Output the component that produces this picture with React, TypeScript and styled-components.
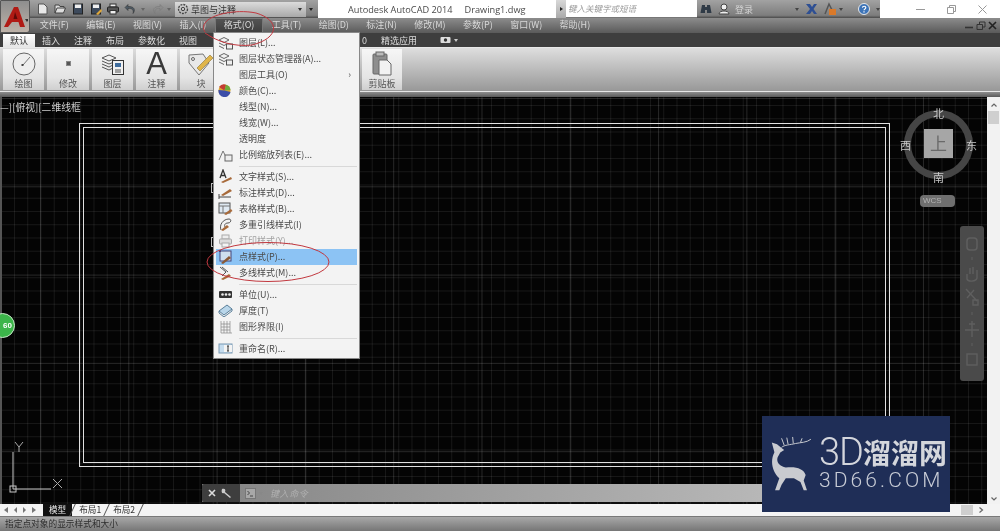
import React from "react";
import styled, { createGlobalStyle } from "styled-components";

const CJK = `"Noto Sans CJK SC", "Liberation Sans", sans-serif`;

const Global = createGlobalStyle`
  html, body { margin: 0; padding: 0; background: #000; overflow: hidden; }
  * { box-sizing: border-box; }
`;

const Page = styled.div`
  position: relative;
  width: 1000px;
  height: 531px;
  display: flex;
  flex-direction: column;
  overflow: hidden;
  font-family: ${CJK};
  font-size: 9px;
  background: #fff;
  filter: blur(0.4px);
`;

/* ---- top bars ---- */
const TitleBar = styled.div`
  height: 18px;
  display: flex;
  background: #fff;
  padding-left: 30px;
  flex: none;
`;
const GreyStrip = styled.div<{ $w: number }>`
  width: ${(p) => p.$w}px;
  height: 18px;
  flex: none;
  display: flex;
  align-items: center;
  background: linear-gradient(#a2a2a2, #7d7d7d 85%, #4a4a4a);
`;
const QatIcon = styled.span<{ $ml?: number }>`
  display: inline-flex;
  margin-left: ${(p) => p.$ml ?? 5}px;
`;
const Caret = styled.span<{ $ml?: number; $c?: string }>`
  display: inline-block;
  margin-left: ${(p) => p.$ml ?? 3}px;
  width: 0;
  height: 0;
  border: 2px solid transparent;
  border-top: 3px solid ${(p) => p.$c ?? "#444"};
  border-bottom: 0;
`;
const Combo = styled.div`
  width: 131px;
  height: 15px;
  margin-left: 4px;
  display: flex;
  align-items: center;
  padding: 0 4px 0 2px;
  background: linear-gradient(#dcdcdc, #a8a8a8);
  color: #333;
  font-size: 9px;
  gap: 2px;
`;
const ComboLabel = styled.span`
  flex: 1;
`;
const TitleText = styled.div`
  width: 238px;
  flex: none;
  display: flex;
  padding-left: 30px;
  gap: 12px;
  align-items: center;
  font-family: "Open Sans", "Liberation Sans", sans-serif;
  font-size: 9.2px;
  color: #4a4a4a;
  white-space: nowrap;
`;
const SearchArrow = styled.div`
  width: 10px;
  height: 18px;
  flex: none;
  background: linear-gradient(#d8d8d8, #aaa);
  display: flex;
  align-items: center;
  justify-content: center;
  color: #222;
  &::before {
    content: "";
    border: 2px solid transparent;
    border-left: 3px solid #222;
    border-right: 0;
  }
`;
const SearchBox = styled.div`
  width: 131px;
  height: 18px;
  flex: none;
  background: #fff;
  border-bottom: 1px solid #777;
  color: #9a9a9a;
  font-style: italic;
  font-size: 8.5px;
  padding-left: 2px;
  line-height: 17px;
`;
const LoginLabel = styled.span`
  color: #d4d4d4;
  font-size: 9px;
  margin-left: 5px;
  width: 63px;
`;
const WindowButtons = styled.div`
  flex: 1;
  display: flex;
  align-items: center;
  justify-content: flex-end;
  gap: 22px;
  padding-right: 13px;
`;
const MenuBar = styled.div`
  height: 15px;
  flex: none;
  display: flex;
  align-items: center;
  padding-left: 31px;
  background: linear-gradient(#8c8c8c, #5a5a5a);
`;
const MenuItem = styled.div<{ $active?: boolean }>`
  height: 15px;
  padding: 0 8.7px;
  line-height: 14px;
  color: #d8d8d8;
  white-space: nowrap;
  background: ${(p) => (p.$active ? "linear-gradient(#555,#3d3d3d)" : "transparent")};
  ${(p) => (p.$active ? "box-shadow: inset 0 0 0 1px #777;" : "")}
`;
const DocButtons = styled.div`
  margin-left: auto;
  padding-right: 3px;
  display: flex;
  align-items: center;
  gap: 2px;
`;
const TabRow = styled.div`
  height: 14px;
  flex: none;
  display: flex;
  align-items: flex-end;
  padding-left: 3px;
  background: #3e3e3e;
`;
const Tab = styled.div<{ $active?: boolean; $ml?: number }>`
  height: 13px;
  padding: 0 7px;
  margin-left: ${(p) => p.$ml ?? 0}px;
  line-height: 13px;
  white-space: nowrap;
  color: ${(p) => (p.$active ? "#333" : "#dcdcdc")};
  background: ${(p) => (p.$active ? "linear-gradient(#fff,#e6e6e6)" : "transparent")};
`;
const TabCamera = styled.span`
  margin-left: 16px;
  align-self: center;
  display: inline-flex;
  align-items: center;
  gap: 3px;
`;

/* ---- ribbon ---- */
const Ribbon = styled.div`
  height: 45px;
  flex: none;
  display: flex;
  gap: 3px;
  padding: 1px 0 1px 3px;
  background: linear-gradient(#dedede, #989898);
  border-top: 1px solid #e8e8e8;
  border-bottom: 1px solid #e6e6e6;
`;
const Panel = styled.div<{ $w: number; $ml?: number }>`
  width: ${(p) => p.$w}px;
  margin-left: ${(p) => p.$ml ?? 0}px;
  flex: none;
  display: flex;
  flex-direction: column;
  align-items: center;
  background: linear-gradient(#f6f6f6, #e4e4e4 70%, #cfcfcf);
`;
const PanelIcon = styled.div`
  height: 29px;
  display: flex;
  align-items: center;
  justify-content: center;
`;
const PanelLabel = styled.div`
  color: #555;
  line-height: 12px;
`;
const BigA = styled.span`
  font-family: "Liberation Sans", sans-serif;
  font-size: 31px;
  line-height: 29px;
  color: #3a3a3a;
`;
const RibbonShadow = styled.div`
  height: 5px;
  flex: none;
  background: linear-gradient(#8e8e8e, #5a5a5a);
`;

/* ---- workspace ---- */
const Workspace = styled.div`
  flex: 1;
  min-height: 0;
  display: flex;
  background: #555;
  padding-left: 2px;
`;
const Canvas = styled.div`
  position: relative;
  flex: 1;
  display: flex;
  padding: 26px 97px 37px 77px;
  background-color: #040404;
  background-image:
    linear-gradient(90deg, rgba(255, 255, 255, 0.14) 1px, transparent 1px),
    linear-gradient(rgba(255, 255, 255, 0.14) 1px, transparent 1px),
    linear-gradient(90deg, rgba(255, 255, 255, 0.08) 1px, transparent 1px),
    linear-gradient(rgba(255, 255, 255, 0.08) 1px, transparent 1px);
  background-size: 88.3px 88.3px, 88.3px 88.3px, 13.25px 13.25px, 13.25px 13.25px;
  background-position: 38px 1px, 38px 1px, 12px 8px, 12px 8px;
`;
const OuterFrame = styled.div`
  flex: 1;
  display: flex;
  padding: 3px;
  border: 1px solid #e0e0e0;
`;
const InnerFrame = styled.div`
  flex: 1;
  border: 1px solid #e0e0e0;
`;
const ViewLabel = styled.div`
  position: absolute;
  left: -2px;
  top: 4px;
  color: #d0d0d0;
  font-size: 9.8px;
  line-height: 13px;
  white-space: nowrap;
`;
const Bracket = styled.div<{ $top: number; $h: number }>`
  position: absolute;
  left: 209px;
  top: ${(p) => p.$top}px;
  width: 5px;
  height: ${(p) => p.$h}px;
  border: 1px solid #bbb;
`;
const GreenBadge = styled.div`
  position: absolute;
  left: -12px;
  top: 216px;
  width: 25px;
  height: 25px;
  border-radius: 50%;
  background: #3cb54a;
  border: 1px solid #c8e8c8;
  color: #fff;
  font: bold 8px/23px "Liberation Sans", sans-serif;
  padding-left: 12px;
`;
const UcsIcon = styled.svg`
  position: absolute;
  left: 6px;
  top: 345px;
`;
const Compass = styled.div`
  position: absolute;
  left: 894px;
  top: 5px;
  width: 88px;
  height: 108px;
  color: #c8c8c8;
  font-size: 11px;
`;
const Ring = styled.div`
  position: absolute;
  left: 8px;
  top: 8px;
  width: 69px;
  height: 69px;
  border-radius: 50%;
  border: 7px solid #454545;
`;
const Cube = styled.div`
  position: absolute;
  left: 28px;
  top: 27px;
  width: 29px;
  height: 29px;
  background: #a6a6a6;
  color: #6a6a6a;
  font-size: 17px;
  line-height: 28px;
  text-align: center;
`;
const Dir = styled.span<{ $x: number; $y: number }>`
  position: absolute;
  left: ${(p) => p.$x}px;
  top: ${(p) => p.$y}px;
  line-height: 14px;
`;
const WcsPill = styled.div`
  position: absolute;
  left: 24px;
  top: 93px;
  width: 35px;
  height: 12px;
  border-radius: 4px;
  background: #6f6f6f;
  color: #b4b4b4;
  font: 8px/12px "Liberation Sans", sans-serif;
  padding-left: 3px;
`;
const NavBar = styled.div`
  position: absolute;
  left: 958px;
  top: 129px;
  width: 24px;
  height: 155px;
  border-radius: 3px;
  background: #4a4a4a;
  display: flex;
  flex-direction: column;
  align-items: center;
  padding-top: 10px;
  gap: 4px;
`;
const CommandLine = styled.div`
  position: absolute;
  left: 200px;
  bottom: 2px;
  width: 570px;
  height: 18px;
  display: flex;
  align-items: center;
  background: linear-gradient(90deg, #858585, #b8b8b8);
`;
const CommandTools = styled.div`
  width: 38px;
  height: 18px;
  flex: none;
  display: flex;
  align-items: center;
  gap: 4px;
  padding-left: 6px;
  background: #3e3e3e;
  border-radius: 2px 0 0 2px;
  color: #ccc;
`;
const CommandPrompt = styled.div`
  margin-left: 5px;
  display: flex;
  align-items: center;
  gap: 3px;
  color: #a8a8a8;
`;
const CommandText = styled.span`
  margin-left: 7px;
  font-size: 9px;
  font-style: italic;
  letter-spacing: 0.6px;
  color: #b0b0b0;
`;
const ScrollV = styled.div`
  width: 13px;
  flex: none;
  background: #f2f2f2;
  display: flex;
  flex-direction: column;
  align-items: center;
  padding-top: 5px;
`;
const ScrollThumb = styled.div`
  width: 11px;
  height: 13px;
  margin-top: 3px;
  background: #cfcfcf;
`;
const ScrollEnd = styled.div`
  margin-top: auto;
  margin-bottom: 2px;
  display: flex;
`;

/* ---- bottom rows ---- */
const LayoutRow = styled.div`
  height: 12px;
  flex: none;
  display: flex;
  align-items: center;
  background: #f4f4f4;
  padding-left: 3px;
  color: #333;
  font-size: 8.6px;
`;
const NavArrows = styled.div`
  width: 40px;
  display: flex;
  gap: 2px;
  flex: none;
`;
const SheetTab = styled.div<{ $active?: boolean }>`
  position: relative;
  height: 12px;
  line-height: 11px;
  padding: 0 ${(p) => (p.$active ? 6 : 5)}px;
  margin-right: 2px;
  white-space: nowrap;
  color: ${(p) => (p.$active ? "#eee" : "#333")};
  background: ${(p) => (p.$active ? "#111" : "transparent")};
  &::after {
    content: "";
    position: absolute;
    right: -1px;
    top: 0;
    height: 12px;
    width: 1px;
    background: #555;
    transform: skewX(-25deg);
  }
`;
const HThumbGroup = styled.div`
  margin-left: auto;
  padding-right: 16px;
  display: flex;
  align-items: center;
  gap: 5px;
`;
const HThumb = styled.div`
  width: 12px;
  height: 10px;
  background: #cfcfcf;
`;
const StatusBar = styled.div`
  height: 15px;
  flex: none;
  padding-left: 5px;
  font-size: 8.7px;
  line-height: 16px;
  color: #2e2e2e;
  background: linear-gradient(#4a4a4a 0, #a8a8a8 1px, #767676);
`;

/* ---- overlays ---- */
const LogoBox = styled.div`
  position: absolute;
  left: 0;
  top: 0;
  width: 30px;
  height: 33px;
  display: flex;
  align-items: center;
  padding-left: 3px;
  background: linear-gradient(#8e8e8e, #bdb2a8);
  border: 1px solid #555;
  border-radius: 0 0 3px 0;
`;
const Dropdown = styled.div`
  position: absolute;
  left: 214px;
  top: 33px;
  width: 145px;
  padding: 2px 2px 1px;
  background: #f3f3f3;
  box-shadow: 0 0 0 1px #888;
`;
const Row = styled.div<{ $hot?: boolean; $dim?: boolean }>`
  height: 16px;
  padding-bottom: 1px;
  display: flex;
  align-items: center;
  background: ${(p) => (p.$hot ? "#8cc3f4" : "transparent")};
  color: ${(p) => (p.$dim ? "#a0a0a0" : "#4a4a4a")};
  white-space: nowrap;
`;
const RowIcon = styled.span`
  width: 23px;
  padding-left: 2px;
  flex: none;
  display: flex;
  align-items: center;
`;
const RowChevron = styled.span`
  margin-left: auto;
  margin-right: 6px;
  font-size: 9px;
  color: #555;
`;
const Sep = styled.div`
  height: 1px;
  margin: 3px 0 2px 23px;
  background: #d8d8d8;
`;
const Annotations = styled.svg`
  position: absolute;
  left: 0;
  top: 0;
  pointer-events: none;
`;
const Watermark = styled.div`
  position: absolute;
  left: 762px;
  top: 416px;
  width: 188px;
  height: 96px;
  background: #1f2e57;
  display: flex;
  align-items: center;
  padding-left: 9px;
  color: #d4d6dc;
`;
const BrandText = styled.div`
  margin-left: 7px;
  display: flex;
  flex-direction: column;
`;
const BrandTop = styled.div`
  display: flex;
  align-items: center;
  height: 32px;
  font-family: "Roboto", sans-serif;
  font-weight: 300;
  font-size: 38px;
  line-height: 32px;
  letter-spacing: -1px;
`;
const BrandCjk = styled.span`
  font-family: ${CJK};
  font-weight: 700;
  font-size: 28px;
  letter-spacing: 0;
`;
const BrandUrl = styled.div`
  font-family: "Roboto", sans-serif;
  font-weight: 300;
  font-size: 21px;
  line-height: 24px;
  letter-spacing: 3.1px;
  white-space: nowrap;
  color: #c8ccd6;
`;

/* ---- drawings ---- */
const S = ({ w = 12, h = 12, vb, children }: { w?: number; h?: number; vb?: string; children: React.ReactNode }) => (
  <svg width={w} height={h} viewBox={vb ?? `0 0 ${w} ${h}`} fill="none">
    {children}
  </svg>
);

const LayerIcon = () => (
  <S w={16} h={14}>
    <path d="M1 4 L6 1.5 L11 4 L6 6.5Z M1 7 L6 9.5 L9 8 M1 10 L6 12.5" stroke="#666" />
    <rect x="8.5" y="8" width="6" height="5" fill="#eee" stroke="#555" />
  </S>
);
const ColorIcon = () => (
  <svg width="13" height="13" viewBox="0 0 13 13">
    <circle cx="6.5" cy="6.5" r="6" fill="#d9a531" />
    <path d="M6.5 6.5 L1 3 A6 6 0 0 1 8 .7Z" fill="#c33c34" />
    <path d="M6.5 6.5 L8 .7 A6 6 0 0 1 12.5 6Z" fill="#6dab3d" />
    <path d="M6.5 6.5 L.5 6 A6 6 0 0 0 12.5 8 Z" fill="#3c4ea8" />
  </svg>
);
const ScaleIcon = () => (
  <S w={15} h={14}>
    <path d="M1 12 L5 3 L8 9" stroke="#777" />
    <rect x="7" y="7" width="7" height="6" fill="#eee" stroke="#666" />
  </S>
);
const TextStyleIcon = () => (
  <S w={15} h={15}>
    <path d="M2 9 L5 1 L8 9 M3 6.5H7" stroke="#333" strokeWidth="1.3" />
    <path d="M3 13 L13 8 L14 10 L5 14Z" fill="#a86a3a" />
  </S>
);
const DimStyleIcon = () => (
  <S w={15} h={14}>
    <path d="M1 11 L13 11 M1 8V13" stroke="#444" />
    <path d="M3 9 L12 3 L14 5 L5 10Z" fill="#a86a3a" />
  </S>
);
const TableIcon = () => (
  <S w={15} h={14}>
    <rect x="1" y="1" width="11" height="10" fill="#dfe9f2" stroke="#555" />
    <path d="M1 4H12M5 4V11" stroke="#777" />
    <path d="M6 12 L13 7 L14.5 9 L8 13Z" fill="#a86a3a" />
  </S>
);
const LeaderIcon = () => (
  <S w={15} h={15}>
    <path d="M3 13 C1 8 5 2 11 2 C14 2 13 6 10 6 C7 6 6 8 7 10" stroke="#555" />
    <path d="M3 13 L9 8 L11 10 L5 14Z" fill="#a86a3a" />
  </S>
);
const PrintIcon = () => (
  <S w={15} h={14}>
    <rect x="4" y="1" width="7" height="4" fill="#eee" stroke="#aaa" />
    <rect x="1.5" y="5" width="12" height="5" rx="1" fill="#ddd" stroke="#aaa" />
    <rect x="4" y="9" width="7" height="4" fill="#f4f4f4" stroke="#aaa" />
  </S>
);
const PointIcon = () => (
  <S w={15} h={14}>
    <rect x="2" y="1" width="11" height="10" fill="#cfe0ef" stroke="#447" />
    <rect x="1" y="0" width="2" height="2" fill="#447" />
    <path d="M3 13 L11 6 L13 8 L5 14Z" fill="#8a5a36" />
  </S>
);
const MlineIcon = () => (
  <S w={15} h={14}>
    <path d="M2 1 L8 6 L4 10 M4 1 L10 6" stroke="#555" />
    <path d="M3 13 L11 8 L13 10 L5 14Z" fill="#a86a3a" />
  </S>
);
const UnitsIcon = () => (
  <S w={15} h={10}>
    <rect x="1" y="1" width="13" height="7" rx="1" fill="#333" />
    <circle cx="4.5" cy="4.5" r="1.3" fill="#eee" />
    <circle cx="8" cy="4.5" r="1.3" fill="#eee" />
    <circle cx="11.5" cy="4.5" r="1.3" fill="#eee" />
  </S>
);
const ThickIcon = () => (
  <S w={15} h={13}>
    <path d="M1 7 L9 1 L14 5 L6 11Z" fill="#b9d6ea" stroke="#5a7f99" />
    <path d="M1 7 V9 L6 13 L14 7 V5" stroke="#5a7f99" />
  </S>
);
const LimitsIcon = () => (
  <S w={15} h={14}>
    <path d="M3 1V13H14 M3 4H12 M3 7H12 M3 10H12 M6 1V13 M9 1V13 M12 1V13" stroke="#888" strokeWidth=".7" />
  </S>
);
const RenameIcon = () => (
  <S w={15} h={11}>
    <rect x="1" y="1" width="13" height="9" fill="#c5dcee" stroke="#7a9ab4" />
    <rect x="6" y="2" width="8" height="7" fill="#f4f4f4" />
    <path d="M9 3H11M10 3V8M9 8H11" stroke="#333" />
  </S>
);

const menuItems: (
  | { sep: true }
  | { label: string; icon?: React.ReactNode; more?: boolean; hot?: boolean; dim?: boolean; sep?: false }
)[] = [
  { label: "图层(L)...", icon: <LayerIcon /> },
  { label: "图层状态管理器(A)...", icon: <LayerIcon /> },
  { label: "图层工具(O)", more: true },
  { label: "颜色(C)...", icon: <ColorIcon /> },
  { label: "线型(N)..." },
  { label: "线宽(W)..." },
  { label: "透明度" },
  { label: "比例缩放列表(E)...", icon: <ScaleIcon /> },
  { sep: true },
  { label: "文字样式(S)...", icon: <TextStyleIcon /> },
  { label: "标注样式(D)...", icon: <DimStyleIcon /> },
  { label: "表格样式(B)...", icon: <TableIcon /> },
  { label: "多重引线样式(I)", icon: <LeaderIcon /> },
  { label: "打印样式(Y)...", icon: <PrintIcon />, dim: true },
  { label: "点样式(P)...", icon: <PointIcon />, hot: true },
  { label: "多线样式(M)...", icon: <MlineIcon /> },
  { sep: true },
  { label: "单位(U)...", icon: <UnitsIcon /> },
  { label: "厚度(T)", icon: <ThickIcon /> },
  { label: "图形界限(I)", icon: <LimitsIcon /> },
  { sep: true },
  { label: "重命名(R)...", icon: <RenameIcon /> },
];

const menus = ["文件(F)", "编辑(E)", "视图(V)", "插入(I)", "格式(O)", "工具(T)", "绘图(D)", "标注(N)", "修改(M)", "参数(P)", "窗口(W)", "帮助(H)"];
const tabs = ["默认", "插入", "注释", "布局", "参数化", "视图"];

const Chevron = ({ up }: { up?: boolean }) => (
  <S w={8} h={6}>
    <path d={up ? "M1.5 4.5 L4 2 L6.5 4.5" : "M1.5 1.5 L4 4 L6.5 1.5"} stroke="#666" strokeWidth="1.2" />
  </S>
);

const Arrow = ({ d }: { d: string }) => (
  <S w={7} h={8}>
    <path d={d} fill="#777" />
  </S>
);

const Deer = () => (
  <svg width="41" height="56" viewBox="60 85 125 172" fill="none" style={{ flex: "none" }}>
    <path
      d="M62 105 L78 110 L92 122 L100 128 L88 136 L80 150 C75 165 85 178 105 182 C135 178 160 185 166 205 L160 222 L170 252 L160 252 L150 226 L130 215 L105 215 L92 235 L85 252 L72 252 L85 215 C65 195 55 165 70 135Z"
      fill="#c9cbd0"
    />
    <path
      d="M92 120 C100 112 120 112 135 108 C150 105 170 105 182 95 M100 113 L92 92 M112 110 L108 90 M128 108 L126 88 M150 105 L155 92"
      stroke="#c9cbd0"
      strokeWidth="3"
    />
  </svg>
);

export default function App() {
  return (
    <Page>
      <Global />
      <TitleBar>
        <GreyStrip $w={288}>
          <QatIcon $ml={7}>
            <S>
              <path d="M1.5 1 H7 L10 4 V11 H1.5Z" fill="#e8e8e8" stroke="#555" />
            </S>
          </QatIcon>
          <QatIcon>
            <S>
              <path d="M1 10 V2 H5 L6 3.5 H10 V5 M1 10 L3 5 H11.5 L9.5 10Z" fill="#ddd" stroke="#444" />
            </S>
          </QatIcon>
          <QatIcon $ml={6}>
            <S>
              <rect x="1.5" y="1" width="9" height="10" fill="#3d4a5c" stroke="#222" />
              <rect x="3" y="1.5" width="6" height="3.5" fill="#eee" />
            </S>
          </QatIcon>
          <QatIcon $ml={6}>
            <S>
              <rect x="1.5" y="1" width="9" height="10" fill="#3d4a5c" stroke="#222" />
              <rect x="3" y="1.5" width="6" height="3.5" fill="#eee" />
              <path d="M6 11 L11 6 L12 8 L8 12Z" fill="#e0a83a" />
            </S>
          </QatIcon>
          <QatIcon $ml={5}>
            <S>
              <rect x="3" y="1" width="6" height="3" fill="#eee" stroke="#333" />
              <rect x=".5" y="4" width="11" height="5" rx="1" fill="#555" stroke="#222" />
              <rect x="3" y="7.5" width="6" height="3.5" fill="#eee" stroke="#333" />
            </S>
          </QatIcon>
          <QatIcon $ml={5}>
            <S>
              <path d="M4 1.5 L1 4.5 L4 7.5 V5.5 C8 5 10 7 9 10.5 C12 7 10 3 4 3.5Z" fill="#4e5a64" stroke="#2a2a2a" strokeWidth=".5" />
            </S>
          </QatIcon>
          <Caret $ml={5} $c="#666" />
          <QatIcon $ml={7}>
            <S>
              <path d="M8 1.5 L11 4.5 L8 7.5 V5.5 C4 5 2 7 3 10.5 C0 7 2 3 8 3.5Z" fill="#8d8d8d" stroke="#777" strokeWidth=".5" />
            </S>
          </QatIcon>
          <Caret $ml={3} $c="#666" />
          <Combo>
            <S w={12} h={12}>
              <circle cx="6" cy="6" r="4.5" stroke="#444" strokeWidth="1.3" strokeDasharray="2 1" />
              <circle cx="6" cy="6" r="1.7" stroke="#444" />
            </S>
            <ComboLabel>草图与注释</ComboLabel>
            <Caret $c="#333" />
          </Combo>
          <Caret $ml={3} $c="#222" />
        </GreyStrip>
        <TitleText>
          <span>Autodesk AutoCAD 2014</span>
          <span>Drawing1.dwg</span>
        </TitleText>
        <SearchArrow />
        <SearchBox>键入关键字或短语</SearchBox>
        <GreyStrip $w={183}>
          <QatIcon $ml={3}>
            <S>
              <path d="M2 2 H5 V4 H7 V2 H10 L11.5 10 H7 V7 H5 V10 H.5Z" fill="#2f3a46" />
            </S>
          </QatIcon>
          <QatIcon $ml={6}>
            <S>
              <circle cx="6" cy="4" r="3" fill="#eee" stroke="#444" />
              <path d="M1 11 C1 7 11 7 11 11Z" fill="#eee" stroke="#444" />
            </S>
          </QatIcon>
          <LoginLabel>登录</LoginLabel>
          <Caret $ml={0} $c="#444" />
          <QatIcon $ml={6}>
            <S w={13} h={12}>
              <path d="M1 1 L5 1 L7 4 L9 1 H12 L8.5 6 L12 11 H9 L7 8 L5 11 H1 L5 6Z" fill="#2e4f93" />
            </S>
          </QatIcon>
          <QatIcon $ml={5}>
            <S w={14} h={14}>
              <path d="M2 12 L6 2 L9 8" stroke="#555" strokeWidth="1.5" />
              <rect x="6" y="7" width="7" height="6" fill="#d9792a" />
            </S>
          </QatIcon>
          <Caret $ml={2} $c="#444" />
          <QatIcon $ml={15}>
            <S>
              <circle cx="6" cy="6" r="5.5" fill="#3d74b8" stroke="#e8e8e8" />
              <path d="M4.4 4.6 C4.6 2.8 7.8 2.8 7.8 4.6 C7.8 6 6 5.8 6 7.3 M6 8.3V9.4" stroke="#fff" strokeWidth="1.2" />
            </S>
          </QatIcon>
          <Caret $ml={6} $c="#444" />
        </GreyStrip>
        <WindowButtons>
          <S w={9} h={9}>
            <path d="M0 4.5H9" stroke="#999" />
          </S>
          <S w={9} h={9}>
            <path d="M.5 2.5H6.5V8.5H.5Z M2.5 2V.5H8.5V6.5H7" stroke="#999" />
          </S>
          <S w={9} h={9}>
            <path d="M.5 .5L8.5 8.5M8.5 .5L.5 8.5" stroke="#999" />
          </S>
        </WindowButtons>
      </TitleBar>

      <MenuBar>
        {menus.map((m) => (
          <MenuItem key={m} $active={m === "格式(O)"}>
            {m}
          </MenuItem>
        ))}
        <DocButtons>
          <S w={10} h={9}>
            <path d="M1 6.5H9" stroke="#333" strokeWidth="1.6" />
          </S>
          <S w={10} h={9}>
            <path d="M1 3.5H6.5V8.5H1Z M3.5 3V1H9V6H7" stroke="#333" />
          </S>
          <S w={9} h={9}>
            <path d="M1 1L8 8M8 1L1 8" stroke="#222" strokeWidth="1.6" />
          </S>
        </DocButtons>
      </MenuBar>

      <TabRow>
        {tabs.map((t, i) => (
          <Tab key={t} $active={i === 0}>
            {t}
          </Tab>
        ))}
        <Tab $ml={151}>0</Tab>
        <Tab>精选应用</Tab>
        <TabCamera>
          <S w={11} h={8}>
            <rect x=".5" y="1" width="10" height="6" rx="1" fill="#ddd" />
            <circle cx="5.5" cy="4" r="1.7" fill="#333" />
          </S>
          <Caret $ml={0} $c="#ccc" />
        </TabCamera>
      </TabRow>

      <Ribbon>
        <Panel $w={41}>
          <PanelIcon>
            <svg width="24" height="24" fill="none">
              <circle cx="12" cy="12" r="11" fill="#eee" stroke="#666" />
              <path d="M11 13 L18 5" stroke="#777" />
              <rect x="9.5" y="12" width="2" height="2" fill="#444" />
            </svg>
          </PanelIcon>
          <PanelLabel>绘图</PanelLabel>
        </Panel>
        <Panel $w={42}>
          <PanelIcon>
            <S w={5} h={5}>
              <rect x=".5" y=".5" width="4" height="4" fill="#555" stroke="#888" />
            </S>
          </PanelIcon>
          <PanelLabel>修改</PanelLabel>
        </Panel>
        <Panel $w={41}>
          <PanelIcon>
            <svg width="24" height="24" fill="none">
              <path d="M1 6 L8 3 L15 6 L8 9Z M1 9 L8 12 L13 10 M1 12 L8 15 L12 13 M1 15 L8 18 L12 16" stroke="#555" />
              <rect x="11.5" y="8.5" width="11" height="14" fill="#f0f0f0" stroke="#333" />
              <rect x="14" y="11" width="6" height="4" fill="#3e6b9c" />
              <path d="M14 18H20M14 20H20" stroke="#555" />
            </svg>
          </PanelIcon>
          <PanelLabel>图层</PanelLabel>
        </Panel>
        <Panel $w={41}>
          <PanelIcon>
            <BigA>A</BigA>
          </PanelIcon>
          <PanelLabel>注释</PanelLabel>
        </Panel>
        <Panel $w={42}>
          <PanelIcon>
            <svg width="28" height="26" fill="none">
              <path d="M2 4 L16 3 L22 12 L12 24 L2 12Z" fill="#e8e8e8" stroke="#777" />
              <circle cx="6" cy="8" r="1.5" stroke="#666" />
              <path d="M10 17 L23 4 L26 7 L13 20Z" fill="#e0b54a" stroke="#7a6020" strokeWidth=".5" />
            </svg>
          </PanelIcon>
          <PanelLabel>块</PanelLabel>
        </Panel>
        <Panel $w={40} $ml={137}>
          <PanelIcon>
            <svg width="22" height="26" fill="none">
              <rect x="2" y="3" width="14" height="20" rx="1" fill="#8e8e8e" stroke="#666" />
              <rect x="5" y="1" width="8" height="4" fill="#bbb" stroke="#666" />
              <path d="M8 9 H16 L20 13 V24 H8Z" fill="#f2f2f2" stroke="#666" />
            </svg>
          </PanelIcon>
          <PanelLabel>剪贴板</PanelLabel>
        </Panel>
      </Ribbon>
      <RibbonShadow />

      <Workspace>
        <Canvas>
          <OuterFrame>
            <InnerFrame />
          </OuterFrame>
          <ViewLabel>—][俯视][二维线框</ViewLabel>
          <Bracket $top={86} $h={10} />
          <Bracket $top={140} $h={10} />
          <GreenBadge>60</GreenBadge>
          <UcsIcon width="56" height="56" fill="none">
            <path d="M5 10 V47 H43" stroke="#c8c8c8" />
            <rect x="2" y="44" width="6" height="6" stroke="#c8c8c8" />
            <path d="M7 0 L11 5 L15 0 M11 5 V10" stroke="#aaa" />
            <path d="M45 37 L54 46 M54 37 L45 46" stroke="#aaa" />
          </UcsIcon>
          <Compass>
            <Ring />
            <Cube>上</Cube>
            <Dir $x={37} $y={4}>北</Dir>
            <Dir $x={37} $y={68}>南</Dir>
            <Dir $x={4} $y={36}>西</Dir>
            <Dir $x={70} $y={36}>东</Dir>
            <WcsPill>WCS</WcsPill>
          </Compass>
          <NavBar>
            <S w={16} h={16}>
              <rect x="3" y="2" width="10" height="12" rx="3" stroke="#5f5f5f" strokeWidth="1.5" />
            </S>
            <S w={14} h={5}>
              <path d="M7 1V4" stroke="#5f5f5f" />
            </S>
            <S w={16} h={18}>
              <path d="M3 9V14C4 17 12 17 13 13V5M6 9V3M9 9V2" stroke="#5f5f5f" strokeWidth="1.4" />
            </S>
            <S w={16} h={20}>
              <path d="M2 2L13 14 M10 3L3 11 M9 13H14V18H9Z" stroke="#5f5f5f" strokeWidth="1.4" />
            </S>
            <S w={14} h={5}>
              <path d="M7 1V4" stroke="#5f5f5f" />
            </S>
            <S w={16} h={18}>
              <path d="M8 1V17 M1 10H15 M5 4H11" stroke="#5f5f5f" strokeWidth="1.4" />
            </S>
            <S w={14} h={5}>
              <path d="M7 1V4" stroke="#5f5f5f" />
            </S>
            <S w={16} h={16}>
              <rect x="3" y="3" width="10" height="11" stroke="#5f5f5f" strokeWidth="1.4" />
            </S>
          </NavBar>
          <CommandLine>
            <CommandTools>
              <S w={8} h={8}>
                <path d="M1 1L7 7M7 1L1 7" stroke="#ddd" strokeWidth="1.6" />
              </S>
              <S w={12} h={12}>
                <path d="M2 2 C5 1 6 3 5 5 L11 10 L10 11 L4 6 C2 7 1 5 2 2Z" fill="#ccc" />
              </S>
            </CommandTools>
            <CommandPrompt>
              <S w={11} h={11}>
                <rect x=".5" y=".5" width="10" height="10" fill="#a8a8a8" stroke="#777" />
                <path d="M2.5 3 L4.5 5 L2.5 7 M5 8H8" stroke="#444" />
              </S>
              <Caret $ml={0} $c="#888" />
            </CommandPrompt>
            <CommandText>键入命令</CommandText>
          </CommandLine>
        </Canvas>
        <ScrollV>
          <Chevron up />
          <ScrollThumb />
          <ScrollEnd>
            <Chevron />
          </ScrollEnd>
        </ScrollV>
      </Workspace>

      <LayoutRow>
        <NavArrows>
          <Arrow d="M5 1 L1 4 L5 7Z" />
          <Arrow d="M5 1 L2 4 L5 7Z" />
          <Arrow d="M2 1 L5 4 L2 7Z" />
          <Arrow d="M2 1 L6 4 L2 7Z" />
        </NavArrows>
        <SheetTab $active>模型</SheetTab>
        <SheetTab>布局1</SheetTab>
        <SheetTab>布局2</SheetTab>
        <HThumbGroup>
          <HThumb />
          <S w={6} h={8}>
            <path d="M1.5 1.5 L4.5 4 L1.5 6.5" stroke="#666" strokeWidth="1.2" />
          </S>
        </HThumbGroup>
      </LayoutRow>
      <StatusBar>指定点对象的显示样式和大小</StatusBar>

      <LogoBox>
        <svg width="24" height="24" viewBox="0 0 24 24">
          <path d="M10 2 H14 L21 22 H16 L14.5 17 H8 L4 22 H0Z" fill="#b01a14" />
          <path d="M11 7 L9.5 14 H13.5Z" fill="#5f0a08" />
          <path d="M21 14 L25 14 L23 17Z" fill="#333" />
        </svg>
      </LogoBox>

      <Dropdown>
        {menuItems.map((it, i) =>
          it.sep ? (
            <Sep key={i} />
          ) : (
            <Row key={it.label} $hot={it.hot} $dim={it.dim}>
              <RowIcon>{it.icon}</RowIcon>
              {it.label}
              {it.more && <RowChevron>›</RowChevron>}
            </Row>
          )
        )}
      </Dropdown>

      <Annotations width="1000" height="531" fill="none">
        <path d="M205 32 C196 17 232 8 256 13 C280 20 280 38 252 45 C234 47 218 42 205 33" stroke="#c2383f" />
        <ellipse cx="268" cy="262" rx="61" ry="19.5" stroke="#c2383f" />
      </Annotations>

      <Watermark>
        <Deer />
        <BrandText>
          <BrandTop>
            3D<BrandCjk>溜溜网</BrandCjk>
          </BrandTop>
          <BrandUrl>3D66.COM</BrandUrl>
        </BrandText>
      </Watermark>
    </Page>
  );
}
